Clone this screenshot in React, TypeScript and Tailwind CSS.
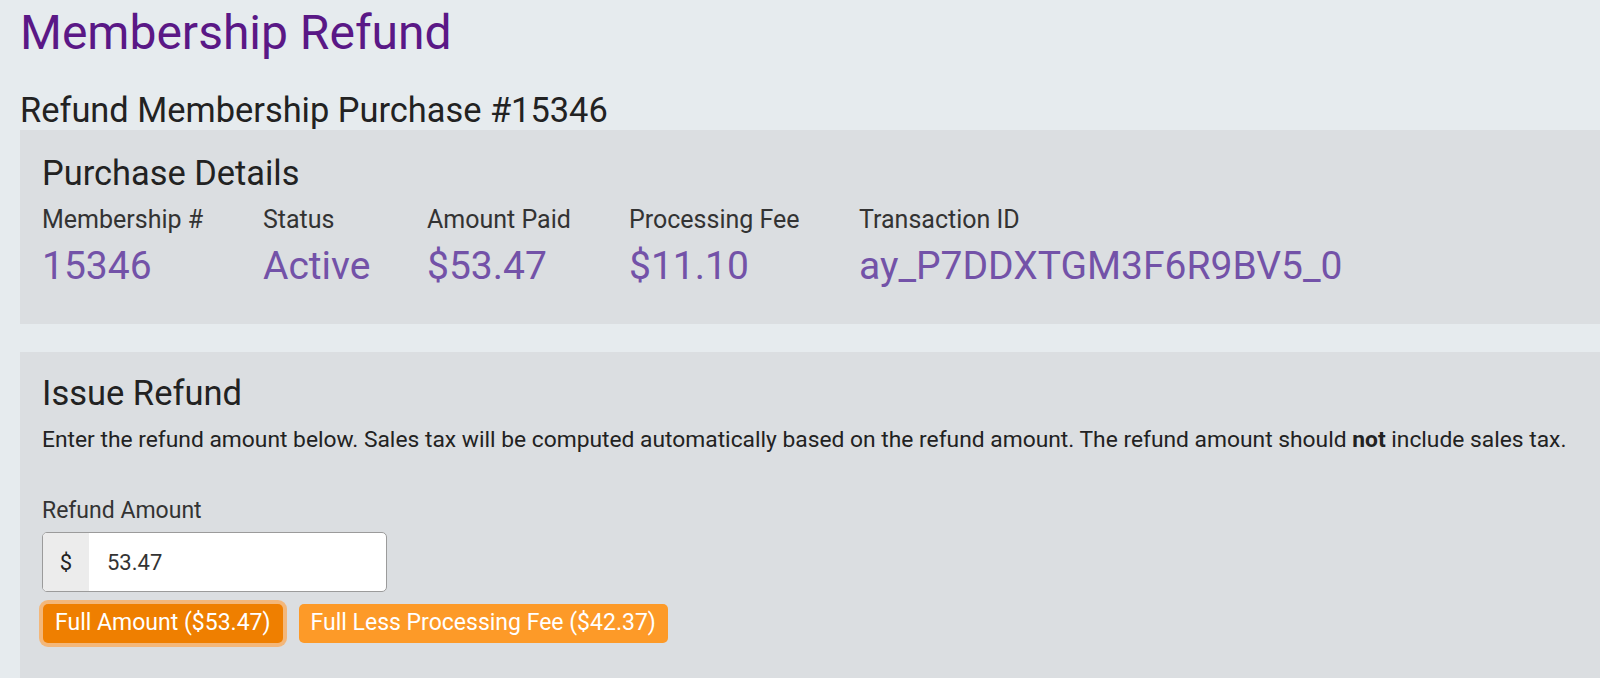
const details = [
  { label: 'Membership #', value: '15346', w: 'w-[221px]' },
  { label: 'Status', value: 'Active', w: 'w-[164px]' },
  { label: 'Amount Paid', value: '$53.47', w: 'w-[202px]' },
  { label: 'Processing Fee', value: '$11.10', w: 'w-[230px]' },
  { label: 'Transaction ID', value: 'ay_P7DDXTGM3F6R9BV5_0', w: '' },
];

export default function App() {
  return (
    <div className="min-h-screen bg-[#e6ebee] pl-5 pt-[5px] font-['Roboto',_'Liberation_Sans',_sans-serif] text-[#222]">
      <h1 className="text-[48px] leading-[56px] text-[#5a1886]">Membership Refund</h1>
      <h3 className="mt-[29px] text-[34.4px] leading-[40px]">Refund Membership Purchase #15346</h3>

      <div className="h-[194px] bg-[#dbdee1] px-[22px] pt-[23px]">
        <h3 className="text-[34.4px] leading-[40px]">Purchase Details</h3>
        <div className="mt-[13px] flex">
          {details.map((d) => (
            <div key={d.label} className={d.w}>
              <div className="text-[25px] leading-[28px] text-[#333]">{d.label}</div>
              <div className="mt-[9px] text-[39px] leading-[46px] text-[#7352a8]">{d.value}</div>
            </div>
          ))}
        </div>
      </div>

      <div className="mt-[28px] h-[340px] bg-[#dbdee1] px-[22px] pt-[21px]">
        <h3 className="text-[34.5px] leading-[40px]">Issue Refund</h3>
        <p className="mt-[14px] whitespace-nowrap text-[22.8px] leading-[26px]">
          Enter the refund amount below. Sales tax will be computed automatically based on the refund amount. The
          refund amount should <b>not</b> include sales tax.
        </p>

        <div className="mt-[44px] text-[23px] leading-[28px] text-[#333]">Refund Amount</div>
        <div className="mt-[7px] flex h-[60px] w-[345px] overflow-hidden rounded-[5px] border border-[#9b9b9b] bg-white">
          <span className="flex w-[46px] items-center justify-center bg-[#ececec] text-[22px]">$</span>
          <input
            className="min-w-0 flex-1 px-[18px] text-[22px] text-[#333] outline-none"
            defaultValue="53.47"
          />
        </div>

        <div className="mt-[12px] flex gap-4 pl-px">
          <button className="h-[39px] rounded-[5px] bg-[#ef7f00] px-[12px] text-[23px] text-white shadow-[0_0_0_4px_#f3b77a]">
            Full Amount ($53.47)
          </button>
          <button className="h-[39px] rounded-[5px] bg-[#fd9a28] px-[12px] text-[23px] text-white">
            Full Less Processing Fee ($42.37)
          </button>
        </div>
      </div>
    </div>
  );
}
